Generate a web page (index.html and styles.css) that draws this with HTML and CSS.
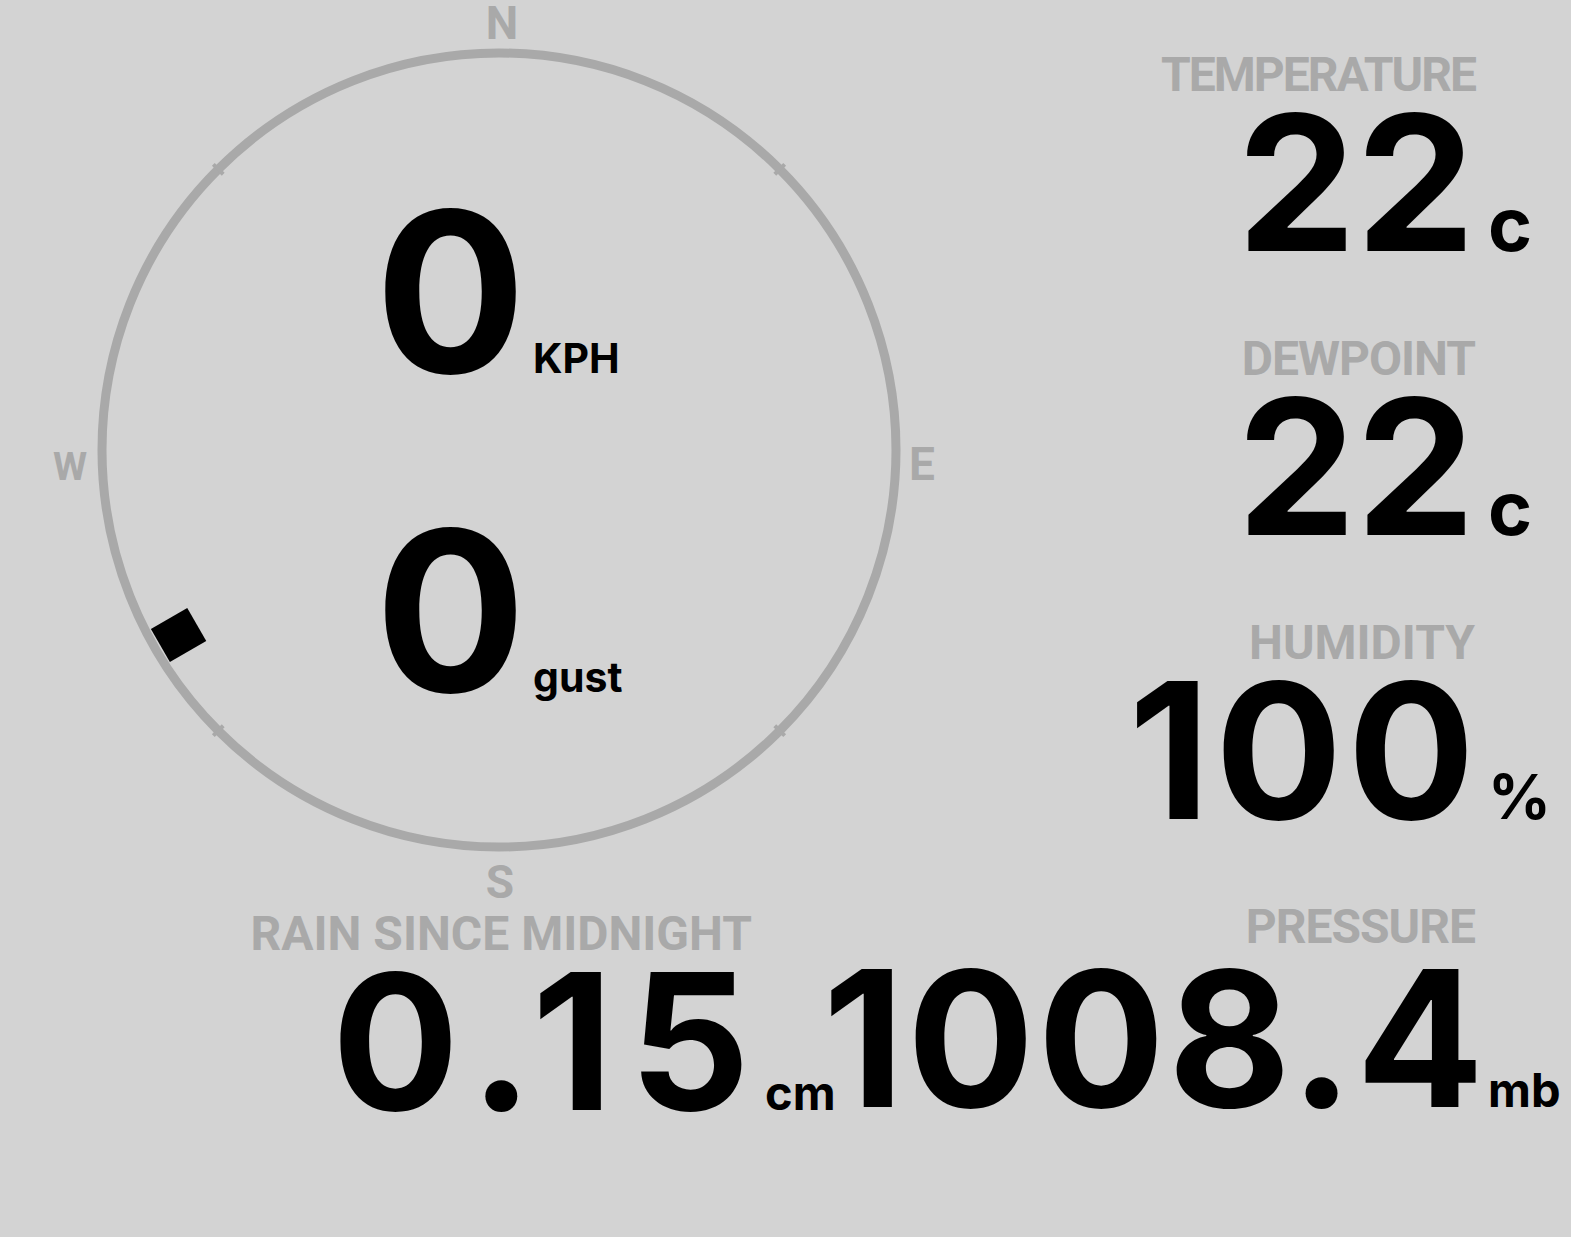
FILE: index.html
```html
<!DOCTYPE html>
<html lang="en">
<head>
    <meta charset="UTF-8">
    <meta name="viewport" content="width=device-width, initial-scale=1.0">
    <title>Weather Station</title>
    <link rel="stylesheet" href="styles.css">
</head>
<body>
    <div class="dash">
        <div class="top">
            <div class="compass">
                <svg class="rose" width="1000" height="903" viewBox="0 0 1000 903">
                    <circle class="ring" cx="499" cy="450" r="397"/>
                    <!-- small ticks every 45 degrees -->
                    <g class="ticks">
                        <line class="tick" x1="499" y1="46" x2="499" y2="60" transform="rotate(45 499 450)"/>
                        <line class="tick" x1="499" y1="46" x2="499" y2="60" transform="rotate(135 499 450)"/>
                        <line class="tick" x1="499" y1="46" x2="499" y2="60" transform="rotate(225 499 450)"/>
                        <line class="tick" x1="499" y1="46" x2="499" y2="60" transform="rotate(315 499 450)"/>
                    </g>
                    <!-- wind direction marker, 240 deg -->
                    <rect class="needle" x="480" y="59" width="38" height="42" transform="rotate(240 499 450)"/>
                    <text class="point" x="502" y="39">N</text>
                    <text class="point" x="922" y="480">E</text>
                    <text class="point" x="500" y="898">S</text>
                    <text class="point west" x="70" y="480">W</text>
                </svg>
                <div class="speeds">
                    <div class="speed">
                        <span class="speed-num">0</span>
                        <span class="speed-unit">KPH</span>
                    </div>
                    <div class="speed">
                        <span class="speed-num">0</span>
                        <span class="speed-unit">gust</span>
                    </div>
                </div>
            </div>
            <div class="readings">
                <div class="reading">
                    <div class="label label-tight">TEMPERATURE</div>
                    <div class="num">22</div>
                    <div class="unit unit-c">c</div>
                </div>
                <div class="reading">
                    <div class="label">DEWPOINT</div>
                    <div class="num">22</div>
                    <div class="unit unit-c">c</div>
                </div>
                <div class="reading">
                    <div class="label label-loose">HUMIDITY</div>
                    <div class="num num-wide">100</div>
                    <div class="unit unit-pct">%</div>
                </div>
            </div>
        </div>
        <div class="bottom">
            <div class="reading rain">
                <div class="label">RAIN SINCE MIDNIGHT</div>
                <div class="num num-rain">0.15</div>
                <div class="unit unit-sm">cm</div>
            </div>
            <div class="reading">
                <div class="label">PRESSURE</div>
                <div class="num num-press">1008.4</div>
                <div class="unit unit-sm">mb</div>
            </div>
        </div>
    </div>
</body>
</html>
```

FILE: styles.css
```css
body {
    margin: 0;
    background-color: #d3d3d3;
    color: #000;
    font-family: Inter, "Open Sans", sans-serif;
    font-weight: 700;
}
.dash {
    width: 1571px;
}
.top {
    display: grid;
    grid-template-columns: 1000px 1fr;
}
.compass {
    position: relative;
    height: 903px;
}
.rose {
    display: block;
    overflow: visible;
}
.ring {
    fill: none;
    stroke: #a9a9a9;
    stroke-width: 9;
}
.tick {
    stroke: #a9a9a9;
    stroke-width: 4;
}
.needle {
    fill: #000;
}
.point {
    fill: #a9a9a9;
    font-family: Roboto, sans-serif;
    font-weight: 700;
    font-size: 46px;
    text-anchor: middle;
}
.point.west {
    font-size: 39px;
}
.speeds {
    position: absolute;
    left: 375px;
    top: 132px;
}
.speed {
    display: flex;
    align-items: baseline;
    height: 319px;
}
.speed-num {
    font-size: 224px;
    line-height: 319px;
}
.speed-unit {
    font-size: 41px;
    line-height: 1;
    margin-left: 7px;
}
.readings {
    padding-top: 51px;
}
.reading {
    display: grid;
    grid-template-columns: minmax(0, 1fr) 96px;
    align-items: baseline;
    margin-bottom: 67px;
}
.label {
    grid-column: 1;
    justify-self: unsafe end;
    font-family: Roboto, sans-serif;
    font-size: 48px;
    line-height: 47px;
    letter-spacing: -1px;
    white-space: nowrap;
    color: #a9a9a9;
}
.label-tight {
    letter-spacing: -2px;
}
.label-loose {
    letter-spacing: 0;
}
.num {
    grid-column: 1;
    justify-self: unsafe end;
    font-size: 189px;
    line-height: 170px;
    white-space: nowrap;
}
.num-wide {
    letter-spacing: 5px;
    margin-right: -5px;
}
.num-rain {
    letter-spacing: 16px;
    margin-right: -14px;
}
.num-press {
    letter-spacing: 3px;
    margin-right: -12px;
}
.unit {
    grid-column: 2;
    padding-left: 13px;
    line-height: 1;
}
.unit-c {
    font-size: 75px;
}
.unit-pct {
    font-size: 62px;
}
.unit-sm {
    font-size: 47px;
}
.bottom {
    display: grid;
    grid-template-columns: 852px minmax(0, 1fr);
}
.rain {
    grid-template-columns: minmax(0, 1fr) 100px;
}
.rain .label {
    margin-top: 7px;
    letter-spacing: 0;
}
```
